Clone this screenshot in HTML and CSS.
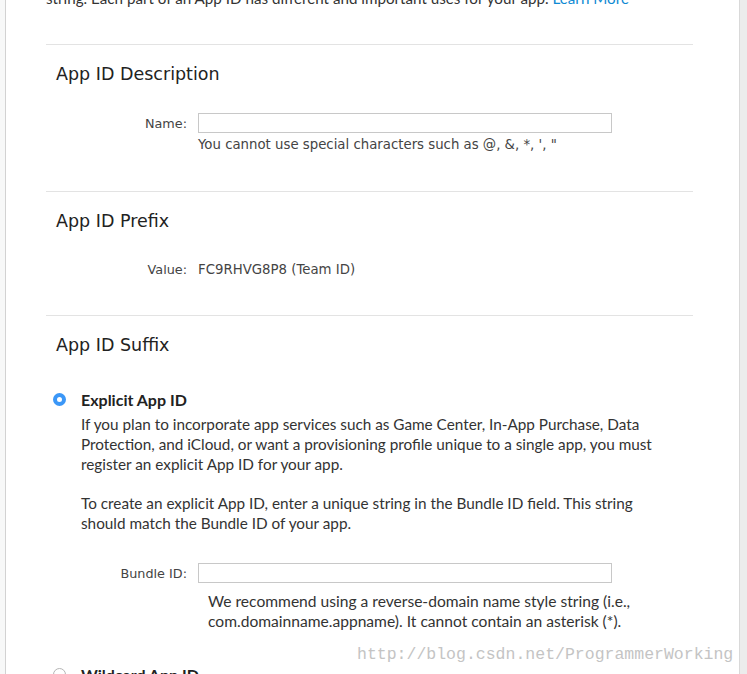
FILE: index.html
```html
<!DOCTYPE html>
<html lang="en">
<head>
    <meta charset="UTF-8">
    <title>Register App ID</title>
    <link rel="stylesheet" href="styles.css">
</head>
<body>
    <div class="page">
        <p class="intro">string. Each part of an App ID has different and important uses for your app. <a href="#">Learn More</a></p>

        <div class="section">
            <h2>App ID Description</h2>
            <div class="form-row">
                <label class="form-label" for="name">Name:</label>
                <input class="text-input" type="text" id="name">
            </div>
            <p class="field-hint">You cannot use special characters such as @, &amp;, *, ', "</p>
        </div>

        <div class="section">
            <h2>App ID Prefix</h2>
            <div class="form-row value-row">
                <span class="form-label">Value:</span>
                <span class="value-text">FC9RHVG8P8 (Team ID)</span>
            </div>
        </div>

        <div class="section last">
            <h2>App ID Suffix</h2>
            <div class="option">
                <div class="option-title">
                    <span class="radio checked"></span>
                    <span>Explicit App ID</span>
                </div>
                <div class="option-body">
                    <p>If you plan to incorporate app services such as Game Center, In-App Purchase, Data Protection, and iCloud, or want a provisioning profile unique to a single app, you must register an explicit App ID for your app.</p>
                    <p>To create an explicit App ID, enter a unique string in the Bundle ID field. This string should match the Bundle ID of your app.</p>
                </div>
                <div class="form-row bundle-row">
                    <label class="form-label" for="bundle">Bundle ID:</label>
                    <input class="text-input" type="text" id="bundle">
                </div>
                <p class="bundle-hint">We recommend using a reverse-domain name style string (i.e., com.domainname.appname). It cannot contain an asterisk (*).</p>
            </div>
            <div class="option">
                <div class="option-title">
                    <span class="radio"></span>
                    <span>Wildcard App ID</span>
                </div>
            </div>
        </div>

        <div class="watermark">http://blog.csdn.net/ProgrammerWorking</div>
    </div>
</body>
</html>
```

FILE: styles.css
```css
body {
    margin: 0;
    background: linear-gradient(to right, #f7f8f8 50%, #ececec 50%);
    font-family: "DejaVu Sans", Arial, sans-serif;
    color: #333;
    overflow: hidden;
}
.page {
    position: relative;
    display: flow-root;
    margin-left: 5px;
    width: 735px;
    height: 700px;
    background-color: #fff;
    border-left: 1px solid #d2d2d2;
    border-right: 1px solid #d9d9d9;
    box-sizing: border-box;
    padding: 0 46px 0 40px;
}
.intro {
    margin: -12px 0 0;
    height: 56px;
    font-family: Lato, "Open Sans", sans-serif;
    font-size: 15.2px;
    line-height: 20px;
    white-space: nowrap;
    color: #333;
}
.intro a {
    color: #0f8ad3;
    text-decoration: none;
}
.section {
    border-top: 1px solid #e3e3e3;
    padding: 18px 0 36px;
}
.section.last {
    padding-bottom: 0;
}
h2 {
    margin: 0 0 0 10px;
    font-size: 17.5px;
    font-weight: normal;
    line-height: 22px;
    color: #222;
}
.form-row {
    display: flex;
    align-items: center;
    gap: 11px;
    margin-top: 28px;
    height: 20px;
}
.form-label {
    width: 141px;
    text-align: right;
    font-size: 12.8px;
    color: #444;
}
.text-input {
    width: 414px;
    height: 20px;
    box-sizing: border-box;
    margin: 0;
    border: 1px solid #c8c8c8;
    border-radius: 0;
    padding: 0 4px;
}
.field-hint {
    margin: 3px 0 1px 152px;
    font-size: 13.3px;
    line-height: 18px;
    color: #444;
}
.value-row {
    margin-top: 27px;
}
.value-text {
    font-size: 13.3px;
    color: #444;
}
.option-title {
    display: flex;
    align-items: center;
    margin-top: 33px;
    height: 20px;
    font-family: Lato, "Open Sans", sans-serif;
    font-weight: bold;
    font-size: 16px;
    color: #222;
}
.radio {
    width: 13px;
    height: 13px;
    margin: 0 15px 0 7px;
    border-radius: 50%;
    box-sizing: border-box;
    border: 1px solid #b5b5b5;
    background-color: #fff;
}
.radio.checked {
    border: 4.5px solid #3b97f7;
    background-color: #fff;
}
.option-body {
    margin: 5px 0 0 35px;
    width: 585px;
    font-family: Lato, "Open Sans", sans-serif;
    font-size: 15.3px;
    line-height: 20px;
    color: #333;
}
.option-body p {
    margin: 0 0 19px;
}
.option-body p:last-child {
    margin-bottom: 0;
}
.bundle-row {
    margin-top: 30px;
}
.bundle-hint {
    margin: 9px 0 0 162px;
    width: 450px;
    font-family: Lato, "Open Sans", sans-serif;
    font-size: 15.6px;
    line-height: 19.5px;
    color: #333;
}
.watermark {
    position: absolute;
    left: 351px;
    top: 645px;
    font-family: "Liberation Mono", monospace;
    font-size: 16.5px;
    color: #c4c4c4;
}
```
